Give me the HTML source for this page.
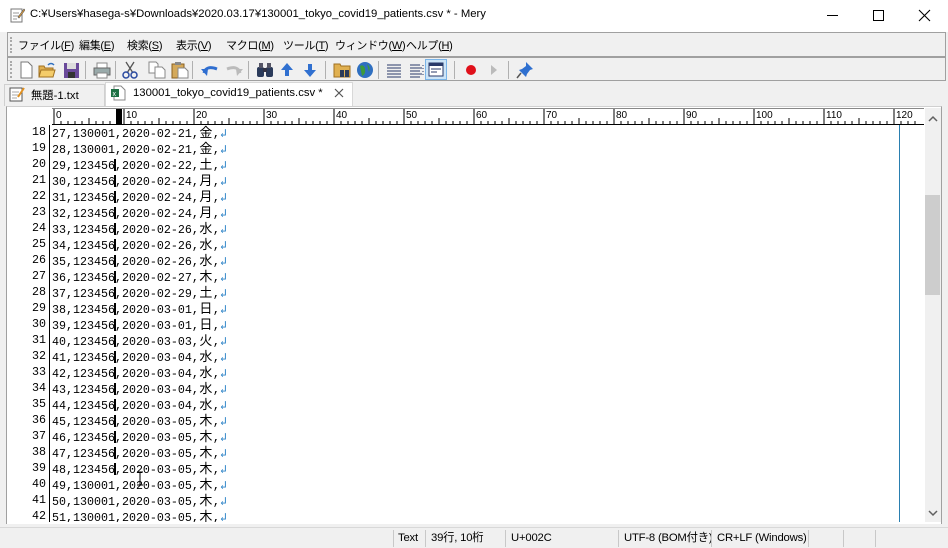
<!DOCTYPE html>
<html><head><meta charset="utf-8"><style>
*{margin:0;padding:0;box-sizing:border-box}
body{width:948px;height:548px;overflow:hidden;background:#f0f0f0;font-family:"Liberation Sans","Noto Sans CJK JP",sans-serif;position:relative}
.a{position:absolute;white-space:nowrap}
#title{left:0;top:0;width:948px;height:32px;background:#fff;font-size:11.3px;color:#000}
.bar{left:7px;width:939px;background:#f0f0f0;border:1px solid #a0a0a0}
.menu span{position:absolute;top:6px;font-size:11px;line-height:14px;white-space:nowrap;letter-spacing:-0.3px}
.ic{position:absolute;top:3px}
.sep{position:absolute;top:3px;width:1px;height:18px;background:#b0b0b0}
.row{position:absolute;left:8px;height:16px;font-family:"Liberation Mono","Noto Sans CJK JP",monospace;font-size:11.67px;line-height:16px;white-space:pre;color:#000}
.ln{position:absolute;left:0;width:38px;text-align:right}
.tx{position:absolute;left:44px}
.k{display:inline-block;width:14px;text-align:center;font-family:"Noto Sans CJK JP",sans-serif;font-size:13px}
.r{color:#2a82c7}
.cur{position:absolute;left:106px;top:3px;width:2px;height:12px;background:#000}
.status span{position:absolute;top:3px;font-size:11.3px;line-height:14px;color:#000;white-space:nowrap;letter-spacing:-0.2px}
.sb{position:absolute;top:2px;width:1px;height:17px;background:#c8c8c8}
</style></head><body>
<div id="title" class="a">
<svg class="a" style="left:9px;top:7px" width="16" height="16" viewBox="0 0 16 16"><rect x="2" y="2" width="11" height="13" fill="#fff" stroke="#777"/><path d="M4 6h6M4 9h6M4 12h4" stroke="#999"/><path d="M9 10l6-8 1 1-6 8z" fill="#e8a23a" stroke="#555" stroke-width=".6"/></svg>
<span class="a" style="left:30px;top:8px">C:¥Users¥hasega-s¥Downloads¥2020.03.17¥130001_tokyo_covid19_patients.csv * - Mery</span>
<div class="a" style="left:827px;top:15px;width:11px;height:1px;background:#000"></div>
<div class="a" style="left:873px;top:10px;width:11px;height:11px;border:1px solid #000"></div>
<svg class="a" style="left:918px;top:9px" width="13" height="13"><path d="M1 1L12 12M12 1L1 12" stroke="#000" stroke-width="1.1"/></svg>
</div>
<div class="a bar menu" style="top:32px;height:25px">
<div class="a" style="left:2px;top:4px;width:2px;height:16px;border-left:2px dotted #aaa"></div>
<span style="left:10px">ファイル(<u>F</u>)</span><span style="left:71px">編集(<u>E</u>)</span><span style="left:119px">検索(<u>S</u>)</span><span style="left:168px">表示(<u>V</u>)</span><span style="left:218px">マクロ(<u>M</u>)</span><span style="left:275px">ツール(<u>T</u>)</span><span style="left:327px">ウィンドウ(<u>W</u>)</span><span style="left:398px">ヘルプ(<u>H</u>)</span>
</div>
<div class="a bar" style="top:57px;height:24px">
<div class="a" style="left:2px;top:3px;width:2px;height:17px;border-left:2px dotted #aaa"></div>
<svg class="ic" style="left:10px" width="16" height="18"><path d="M3 1h7l4 4v12H3z" fill="#fff" stroke="#777"/></svg>
<svg class="ic" style="left:30px" width="18" height="18"><path d="M1 5h5l1 2h8v9H1z" fill="#e0b050" stroke="#a07020"/><path d="M3 9h14l-2 7H1z" fill="#f4cc6a" stroke="#a07020"/><path d="M10 4q3-3 6 0" stroke="#3070c0" fill="none" stroke-width="1.5"/></svg>
<svg class="ic" style="left:55px" width="17" height="18"><rect x="1" y="2" width="15" height="15" fill="#6a4a9a"/><rect x="4" y="2" width="9" height="6" fill="#ddd"/><rect x="5" y="11" width="7" height="6" fill="#333"/></svg>
<div class="sep" style="left:77px"></div>
<svg class="ic" style="left:85px" width="18" height="18"><rect x="4" y="2" width="10" height="5" fill="#fff" stroke="#888"/><rect x="1" y="7" width="16" height="7" fill="#9aa" stroke="#666"/><rect x="4" y="12" width="10" height="5" fill="#fff" stroke="#888"/></svg>
<div class="sep" style="left:107px"></div>
<svg class="ic" style="left:114px" width="16" height="18"><path d="M4 1l7 11M12 1L5 12" stroke="#555" stroke-width="1.3"/><circle cx="4" cy="14" r="3" fill="none" stroke="#2a4aa0" stroke-width="1.5"/><circle cx="12" cy="14" r="3" fill="none" stroke="#2a4aa0" stroke-width="1.5"/></svg>
<svg class="ic" style="left:140px" width="18" height="18"><path d="M1 1h7l2 2v9H1z" fill="#fff" stroke="#888"/><path d="M7 6h7l3 3v8H7z" fill="#fff" stroke="#888"/></svg>
<svg class="ic" style="left:163px" width="18" height="18"><rect x="1" y="3" width="12" height="14" fill="#d4a95a" stroke="#8a6020"/><rect x="4" y="1" width="6" height="3" fill="#888"/><path d="M7 7h7l3 3v7H7z" fill="#fff" stroke="#888"/></svg>
<div class="sep" style="left:184px"></div>
<svg class="ic" style="left:193px" width="18" height="18"><path d="M3 12q2-8 13-4" stroke="#2f6ed0" stroke-width="3" fill="none"/><path d="M0 8l6 7 1-7z" fill="#2f6ed0"/></svg>
<svg class="ic" style="left:217px" width="18" height="18"><path d="M15 12q-2-8-13-4" stroke="#bbb" stroke-width="3" fill="none"/><path d="M18 8l-6 7-1-7z" fill="#bbb"/></svg>
<div class="sep" style="left:240px"></div>
<svg class="ic" style="left:248px" width="18" height="18"><rect x="1" y="6" width="7" height="10" rx="2" fill="#2a3a5a"/><rect x="10" y="6" width="7" height="10" rx="2" fill="#2a3a5a"/><rect x="3" y="2" width="4" height="5" fill="#556"/><rect x="11" y="2" width="4" height="5" fill="#556"/><rect x="7" y="7" width="4" height="4" fill="#334"/></svg>
<svg class="ic" style="left:271px" width="16" height="18"><path d="M8 2l6 7h-4v6H6V9H2z" fill="#3070d0"/></svg>
<svg class="ic" style="left:294px" width="16" height="18"><path d="M8 16l6-7h-4V3H6v6H2z" fill="#3070d0"/></svg>
<div class="sep" style="left:317px"></div>
<svg class="ic" style="left:325px" width="18" height="18"><path d="M1 3h6l1 2h9v11H1z" fill="#e0b050" stroke="#a07020"/><rect x="7" y="9" width="4" height="7" fill="#2a3a5a"/><rect x="12" y="9" width="4" height="7" fill="#2a3a5a"/></svg>
<svg class="ic" style="left:348px" width="18" height="18"><circle cx="9" cy="9" r="8" fill="#2f6fc0"/><path d="M4 5q4-2 5 3t-3 7M11 3q4 3 2 8" fill="#3c9a3c"/></svg>
<div class="sep" style="left:370px"></div>
<svg class="ic" style="left:378px" width="16" height="18"><path d="M1 4h14M1 7h14M1 10h14M1 13h14M1 16h14" stroke="#2a3a6a"/></svg>
<svg class="ic" style="left:401px" width="16" height="18"><path d="M1 4h10M1 7h12M1 10h10M1 13h12M1 16h10" stroke="#2a3a6a"/><path d="M14 4v12" stroke="#2a3a6a" stroke-dasharray="1 2"/></svg>
<div class="a" style="left:417px;top:1px;width:22px;height:21px;background:#cce4f7;border:1px solid #7ab4e8"></div>
<svg class="ic" style="left:420px" width="16" height="18"><rect x="1" y="2" width="14" height="13" fill="#fff" stroke="#2a3a6a"/><rect x="1" y="2" width="14" height="3" fill="#2a3a6a"/><path d="M3 8h10M3 11h6" stroke="#2a3a6a"/></svg>
<div class="sep" style="left:446px"></div>
<div class="a" style="left:458px;top:7px;width:10px;height:10px;border-radius:50%;background:#e0101a"></div>
<svg class="ic" style="left:480px" width="12" height="18"><path d="M3 4l6 5-6 5z" fill="#bbb"/></svg>
<div class="sep" style="left:500px"></div>
<svg class="ic" style="left:508px" width="18" height="18"><path d="M10 1l7 7-3 1-3 4-1 3-7-7 3-1 4-3z" fill="#2f70d0"/><path d="M5 12L1 17" stroke="#555" stroke-width="1.5"/></svg>
</div>
<!-- tabs -->
<div class="a" style="left:4px;top:84px;width:101px;height:22px;border:1px solid #d0d0d0;border-bottom:none;background:#f0f0f0"></div>
<svg class="a" style="left:9px;top:86px" width="16" height="16"><rect x="1" y="2" width="12" height="13" fill="#fff" stroke="#555"/><path d="M3 6h7M3 9h7M3 12h5" stroke="#aaa"/><path d="M9 11l6-9" stroke="#e09020" stroke-width="2"/></svg>
<span class="a" style="left:31px;top:87px;font-size:11.3px">無題-1.txt</span>
<div class="a" style="left:105px;top:82px;width:248px;height:26px;background:#fff;border:1px solid #d8d8d8;border-bottom:none"></div>
<svg class="a" style="left:110px;top:85px" width="16" height="16"><path d="M4 1h7l4 4v10H4z" fill="#fff" stroke="#888"/><rect x="1" y="4" width="8" height="8" fill="#1e7145"/><text x="2.5" y="11" font-size="7" fill="#fff" font-family="Liberation Sans">x</text></svg>
<span class="a" style="left:133px;top:87px;font-size:11.3px">130001_tokyo_covid19_patients.csv *</span>
<svg class="a" style="left:334px;top:88px" width="10" height="10"><path d="M1 1l8 8M9 1L1 9" stroke="#555" stroke-width="1.2"/></svg>
<!-- editor -->
<div class="a" style="left:6px;top:106px;width:936px;height:418px;background:#fff;border:1px solid #a0a0a0;border-top-color:#d0d0d0"></div>
<svg class="a" style="left:52px;top:108px" width="872" height="17">
<line x1="0" y1="16.5" x2="872" y2="16.5" stroke="#000"/>
<line x1="0" y1="0.5" x2="872" y2="0.5" stroke="#888"/>
<path stroke="#000" d="M2 1v16M72 1v16M142 1v16M212 1v16M282 1v16M352 1v16M422 1v16M492 1v16M562 1v16M632 1v16M702 1v16M772 1v16M842 1v16"/>
<path stroke="#000" d="M9 13v4M16 13v4M23 13v4M30 13v4M37 10v7M44 13v4M51 13v4M58 13v4M65 13v4M79 13v4M86 13v4M93 13v4M100 13v4M107 10v7M114 13v4M121 13v4M128 13v4M135 13v4M149 13v4M156 13v4M163 13v4M170 13v4M177 10v7M184 13v4M191 13v4M198 13v4M205 13v4M219 13v4M226 13v4M233 13v4M240 13v4M247 10v7M254 13v4M261 13v4M268 13v4M275 13v4M289 13v4M296 13v4M303 13v4M310 13v4M317 10v7M324 13v4M331 13v4M338 13v4M345 13v4M359 13v4M366 13v4M373 13v4M380 13v4M387 10v7M394 13v4M401 13v4M408 13v4M415 13v4M429 13v4M436 13v4M443 13v4M450 13v4M457 10v7M464 13v4M471 13v4M478 13v4M485 13v4M499 13v4M506 13v4M513 13v4M520 13v4M527 10v7M534 13v4M541 13v4M548 13v4M555 13v4M569 13v4M576 13v4M583 13v4M590 13v4M597 10v7M604 13v4M611 13v4M618 13v4M625 13v4M639 13v4M646 13v4M653 13v4M660 13v4M667 10v7M674 13v4M681 13v4M688 13v4M695 13v4M709 13v4M716 13v4M723 13v4M730 13v4M737 10v7M744 13v4M751 13v4M758 13v4M765 13v4M779 13v4M786 13v4M793 13v4M800 13v4M807 10v7M814 13v4M821 13v4M828 13v4M835 13v4M849 13v4M856 13v4M863 13v4"/>
<rect x="64" y="1" width="6" height="16" fill="#000"/>
<g font-family="Liberation Sans" font-size="10" fill="#000"><text x="4" y="10">0</text><text x="74" y="10">10</text><text x="144" y="10">20</text><text x="214" y="10">30</text><text x="284" y="10">40</text><text x="354" y="10">50</text><text x="424" y="10">60</text><text x="494" y="10">70</text><text x="564" y="10">80</text><text x="634" y="10">90</text><text x="704" y="10">100</text><text x="774" y="10">110</text><text x="844" y="10">120</text></g>
</svg>
<div class="a" style="left:899px;top:125px;width:1px;height:398px;background:#2a7fb0"></div>
<div class="a" style="left:49px;top:125px;width:1px;height:398px;background:#000"></div>
<div class="row" style="top:124px"><span class="ln">18</span><span class="tx">27,130001,2020-02-21,<span class="k">金</span>,<span class="r">↲</span></span></div>
<div class="row" style="top:140px"><span class="ln">19</span><span class="tx">28,130001,2020-02-21,<span class="k">金</span>,<span class="r">↲</span></span></div>
<div class="row" style="top:156px"><span class="ln">20</span><span class="tx">29,123456,2020-02-22,<span class="k">土</span>,<span class="r">↲</span></span><i class="cur"></i></div>
<div class="row" style="top:172px"><span class="ln">21</span><span class="tx">30,123456,2020-02-24,<span class="k">月</span>,<span class="r">↲</span></span><i class="cur"></i></div>
<div class="row" style="top:188px"><span class="ln">22</span><span class="tx">31,123456,2020-02-24,<span class="k">月</span>,<span class="r">↲</span></span><i class="cur"></i></div>
<div class="row" style="top:204px"><span class="ln">23</span><span class="tx">32,123456,2020-02-24,<span class="k">月</span>,<span class="r">↲</span></span><i class="cur"></i></div>
<div class="row" style="top:220px"><span class="ln">24</span><span class="tx">33,123456,2020-02-26,<span class="k">水</span>,<span class="r">↲</span></span><i class="cur"></i></div>
<div class="row" style="top:236px"><span class="ln">25</span><span class="tx">34,123456,2020-02-26,<span class="k">水</span>,<span class="r">↲</span></span><i class="cur"></i></div>
<div class="row" style="top:252px"><span class="ln">26</span><span class="tx">35,123456,2020-02-26,<span class="k">水</span>,<span class="r">↲</span></span><i class="cur"></i></div>
<div class="row" style="top:268px"><span class="ln">27</span><span class="tx">36,123456,2020-02-27,<span class="k">木</span>,<span class="r">↲</span></span><i class="cur"></i></div>
<div class="row" style="top:284px"><span class="ln">28</span><span class="tx">37,123456,2020-02-29,<span class="k">土</span>,<span class="r">↲</span></span><i class="cur"></i></div>
<div class="row" style="top:300px"><span class="ln">29</span><span class="tx">38,123456,2020-03-01,<span class="k">日</span>,<span class="r">↲</span></span><i class="cur"></i></div>
<div class="row" style="top:316px"><span class="ln">30</span><span class="tx">39,123456,2020-03-01,<span class="k">日</span>,<span class="r">↲</span></span><i class="cur"></i></div>
<div class="row" style="top:332px"><span class="ln">31</span><span class="tx">40,123456,2020-03-03,<span class="k">火</span>,<span class="r">↲</span></span><i class="cur"></i></div>
<div class="row" style="top:348px"><span class="ln">32</span><span class="tx">41,123456,2020-03-04,<span class="k">水</span>,<span class="r">↲</span></span><i class="cur"></i></div>
<div class="row" style="top:364px"><span class="ln">33</span><span class="tx">42,123456,2020-03-04,<span class="k">水</span>,<span class="r">↲</span></span><i class="cur"></i></div>
<div class="row" style="top:380px"><span class="ln">34</span><span class="tx">43,123456,2020-03-04,<span class="k">水</span>,<span class="r">↲</span></span><i class="cur"></i></div>
<div class="row" style="top:396px"><span class="ln">35</span><span class="tx">44,123456,2020-03-04,<span class="k">水</span>,<span class="r">↲</span></span><i class="cur"></i></div>
<div class="row" style="top:412px"><span class="ln">36</span><span class="tx">45,123456,2020-03-05,<span class="k">木</span>,<span class="r">↲</span></span><i class="cur"></i></div>
<div class="row" style="top:428px"><span class="ln">37</span><span class="tx">46,123456,2020-03-05,<span class="k">木</span>,<span class="r">↲</span></span><i class="cur"></i></div>
<div class="row" style="top:444px"><span class="ln">38</span><span class="tx">47,123456,2020-03-05,<span class="k">木</span>,<span class="r">↲</span></span><i class="cur"></i></div>
<div class="row" style="top:460px"><span class="ln">39</span><span class="tx">48,123456,2020-03-05,<span class="k">木</span>,<span class="r">↲</span></span><i class="cur"></i></div>
<div class="row" style="top:476px"><span class="ln">40</span><span class="tx">49,130001,2020-03-05,<span class="k">木</span>,<span class="r">↲</span></span></div>
<div class="row" style="top:492px"><span class="ln">41</span><span class="tx">50,130001,2020-03-05,<span class="k">木</span>,<span class="r">↲</span></span></div>
<div class="row" style="top:508px"><span class="ln">42</span><span class="tx">51,130001,2020-03-05,<span class="k">木</span>,<span class="r">↲</span></span></div>
<svg class="a" style="left:136px;top:471px" width="8" height="16"><path d="M4 1v13M1 1h6M1 14h6" stroke="#000"/></svg>
<div class="a" style="left:7px;top:522px;width:934px;height:2px;background:#fff"></div>
<div class="a" style="left:925px;top:108px;width:16px;height:414px;background:#f0f0f0"></div>
<svg class="a" style="left:928px;top:115px" width="10" height="8"><path d="M1 6l4-4 4 4" stroke="#606060" stroke-width="1.5" fill="none"/></svg>
<svg class="a" style="left:928px;top:509px" width="10" height="8"><path d="M1 2l4 4 4-4" stroke="#606060" stroke-width="1.5" fill="none"/></svg>
<div class="a" style="left:925px;top:195px;width:15px;height:100px;background:#cdcdcd"></div>
<!-- status -->
<div class="a status" style="left:0;top:527px;width:948px;height:21px;background:#f0f0f0;border-top:1px solid #d8d8d8">
<i class="sb" style="left:393px"></i><span style="left:398px">Text</span>
<i class="sb" style="left:425px"></i><span style="left:431px">39行, 10桁</span>
<i class="sb" style="left:505px"></i><span style="left:511px">U+002C</span>
<i class="sb" style="left:618px"></i><span style="left:624px">UTF-8 (BOM付き)</span>
<i class="sb" style="left:711px"></i><span style="left:717px">CR+LF (Windows)</span>
<i class="sb" style="left:808px"></i><i class="sb" style="left:843px"></i><i class="sb" style="left:875px"></i>
</div>
</body></html>
